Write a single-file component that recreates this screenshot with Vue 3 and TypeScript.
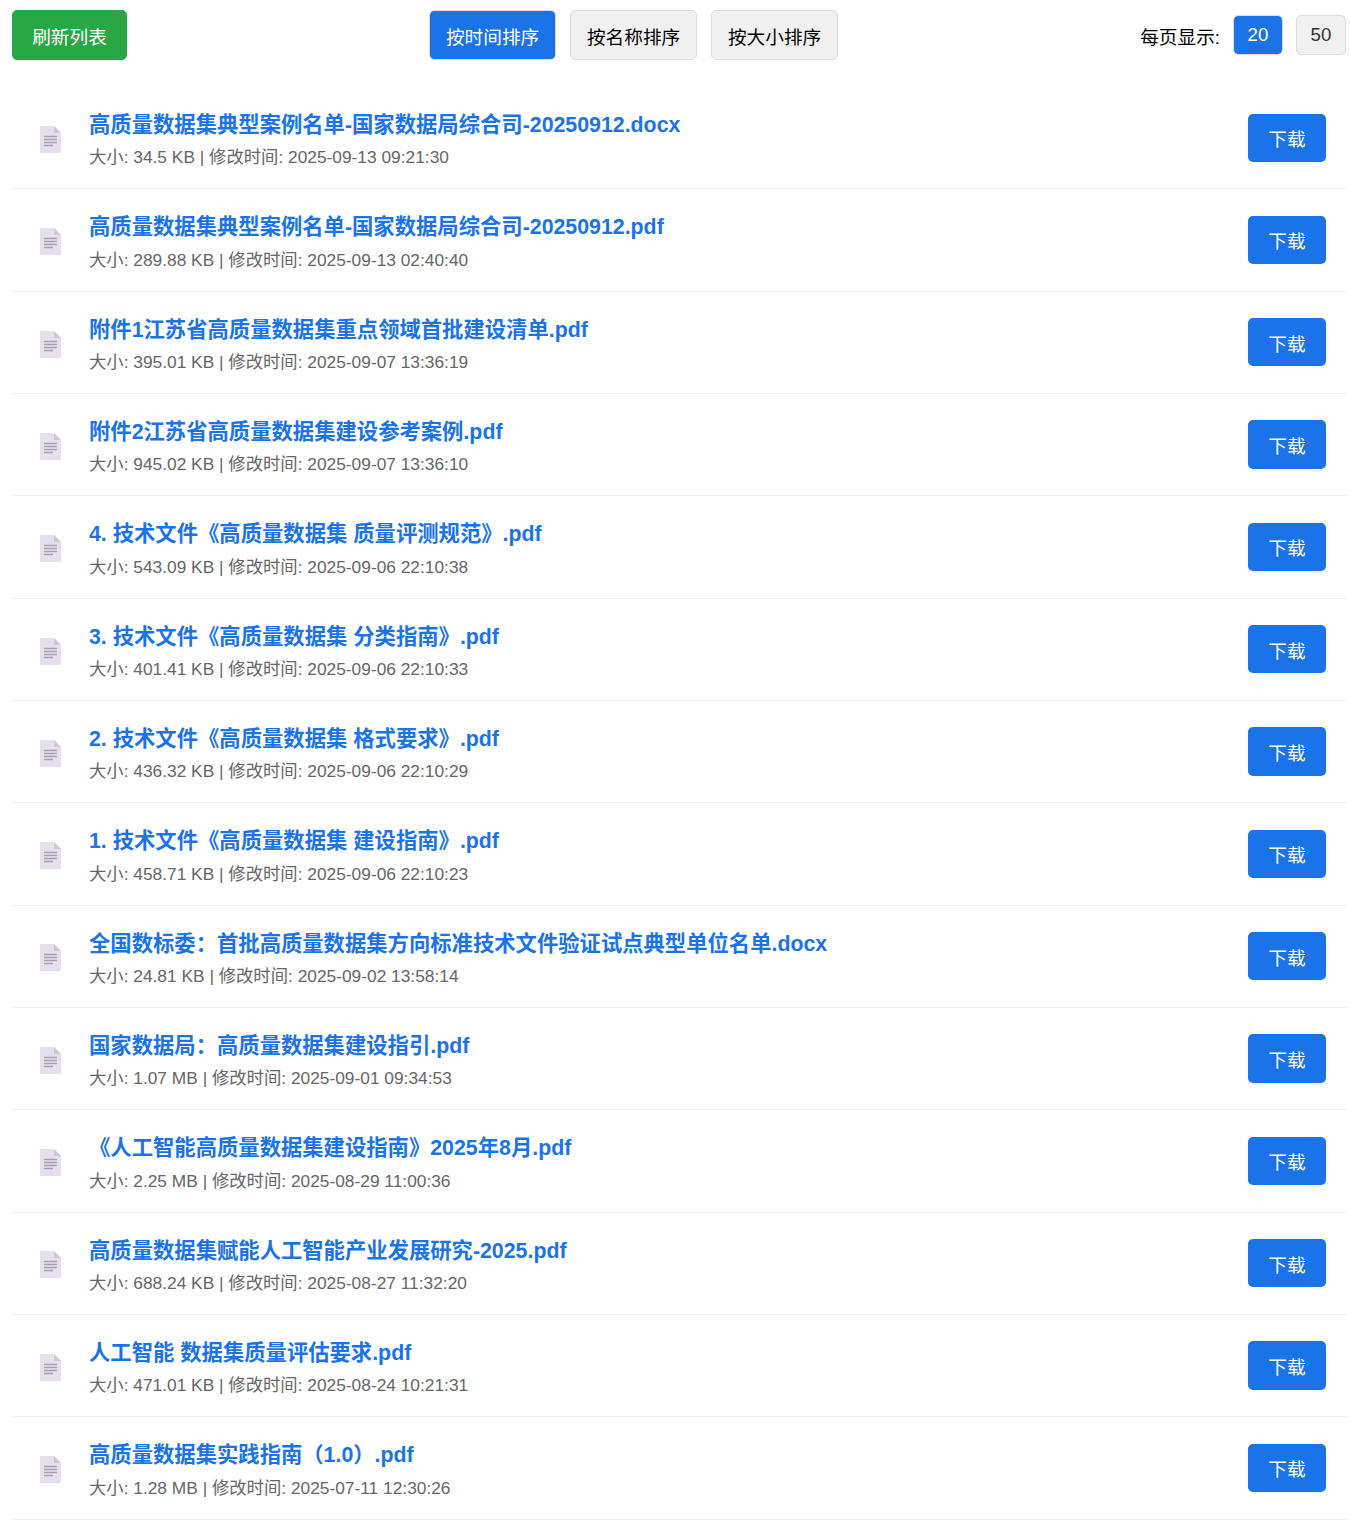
<script setup lang="ts">
interface FileItem { name: string; meta: string }
const files: FileItem[] = [
  { name: '高质量数据集典型案例名单-国家数据局综合司-20250912.docx', meta: '大小: 34.5 KB | 修改时间: 2025-09-13 09:21:30' },
  { name: '高质量数据集典型案例名单-国家数据局综合司-20250912.pdf', meta: '大小: 289.88 KB | 修改时间: 2025-09-13 02:40:40' },
  { name: '附件1江苏省高质量数据集重点领域首批建设清单.pdf', meta: '大小: 395.01 KB | 修改时间: 2025-09-07 13:36:19' },
  { name: '附件2江苏省高质量数据集建设参考案例.pdf', meta: '大小: 945.02 KB | 修改时间: 2025-09-07 13:36:10' },
  { name: '4. 技术文件《高质量数据集 质量评测规范》.pdf', meta: '大小: 543.09 KB | 修改时间: 2025-09-06 22:10:38' },
  { name: '3. 技术文件《高质量数据集 分类指南》.pdf', meta: '大小: 401.41 KB | 修改时间: 2025-09-06 22:10:33' },
  { name: '2. 技术文件《高质量数据集 格式要求》.pdf', meta: '大小: 436.32 KB | 修改时间: 2025-09-06 22:10:29' },
  { name: '1. 技术文件《高质量数据集 建设指南》.pdf', meta: '大小: 458.71 KB | 修改时间: 2025-09-06 22:10:23' },
  { name: '全国数标委：首批高质量数据集方向标准技术文件验证试点典型单位名单.docx', meta: '大小: 24.81 KB | 修改时间: 2025-09-02 13:58:14' },
  { name: '国家数据局：高质量数据集建设指引.pdf', meta: '大小: 1.07 MB | 修改时间: 2025-09-01 09:34:53' },
  { name: '《人工智能高质量数据集建设指南》2025年8月.pdf', meta: '大小: 2.25 MB | 修改时间: 2025-08-29 11:00:36' },
  { name: '高质量数据集赋能人工智能产业发展研究-2025.pdf', meta: '大小: 688.24 KB | 修改时间: 2025-08-27 11:32:20' },
  { name: '人工智能 数据集质量评估要求.pdf', meta: '大小: 471.01 KB | 修改时间: 2025-08-24 10:21:31' },
  { name: '高质量数据集实践指南（1.0）.pdf', meta: '大小: 1.28 MB | 修改时间: 2025-07-11 12:30:26' },
]
</script>

<template>
  <div class="page">
    <div class="toolbar">
      <button class="btn refresh">刷新列表</button>
      <div class="sorts">
        <button class="btn sort active">按时间排序</button>
        <button class="btn sort">按名称排序</button>
        <button class="btn sort">按大小排序</button>
      </div>
      <div class="per-page">
        <span class="per-label">每页显示:</span>
        <button class="btn size active">20</button>
        <button class="btn size">50</button>
      </div>
    </div>
    <ul class="list">
      <li v-for="f in files" :key="f.name" class="row">
        <svg class="icon" width="21" height="27" viewBox="0 0 21 27" aria-hidden="true">
          <path d="M0 0H14L21 7V27H0Z" fill="#e7dfef" />
          <path d="M14 0L21 7H14Z" fill="#cdc9d3" />
          <path d="M4 10.5H17M4 13.5H17M4 16.5H17M4 19.5H13" stroke="#a8a0b0" stroke-width="1.4" fill="none" />
        </svg>
        <div class="info">
          <a class="name" href="#">{{ f.name }}</a>
          <div class="meta">{{ f.meta }}</div>
        </div>
        <button class="download">下载</button>
      </li>
    </ul>
  </div>
</template>

<style>
body { margin: 0; background: #fff; }
</style>

<style scoped>
.page {
  padding: 10px 4px 0 12px;
  font-family: "Liberation Sans", "Noto Sans CJK SC", sans-serif;
}
.toolbar {
  display: flex;
  align-items: flex-start;
  justify-content: space-between;
  height: 50px;
  margin-bottom: 27px;
}
.btn {
  font-family: inherit;
  border-radius: 5px;
  box-sizing: border-box;
  cursor: pointer;
}
.refresh {
  width: 115px;
  height: 50px;
  background: #28a745;
  border: 1px solid #28a745;
  color: #fff;
  font-size: 18.67px;
}
.sorts {
  display: flex;
  gap: 14px;
}
.sort {
  width: 127px;
  height: 50px;
  font-size: 18.67px;
  background: #f0f0f0;
  border: 1px solid #ddd;
  color: #000;
}
.sort.active, .size.active {
  background: #1a73e8;
  background-clip: padding-box;
  border-color: #ddd;
  color: #fff;
}
.per-page {
  display: flex;
  align-items: center;
  gap: 13px;
  margin-top: 5px;
}
.per-label { font-size: 18.67px; color: #000; }
.size {
  width: 50px;
  height: 40px;
  font-size: 18.67px;
  background: #f0f0f0;
  border: 1px solid #ddd;
  color: #333;
}
.list { list-style: none; margin: 0; padding: 0; }
.row {
  display: flex;
  align-items: center;
  box-sizing: border-box;
  height: 102.33px;
  padding: 0 20px 0 28px;
  border-bottom: 1px solid #eee;
}
.icon { flex: none; margin: 3.4px 28px 0 0; }
.info { flex: 1; min-width: 0; margin-top: 4px; }
.name {
  display: block;
  font-size: 21.33px;
  line-height: 32px;
  font-weight: 700;
  color: #1a73e8;
  text-decoration: none;
}
.meta {
  margin-top: 3.34px;
  font-size: 17.33px;
  line-height: 26px;
  color: #666;
}
.download {
  flex: none;
  width: 78px;
  height: 48.33px;
  background: #1a73e8;
  border: none;
  border-radius: 5px;
  color: #fff;
  font-size: 18.67px;
  font-family: inherit;
  cursor: pointer;
}
</style>
